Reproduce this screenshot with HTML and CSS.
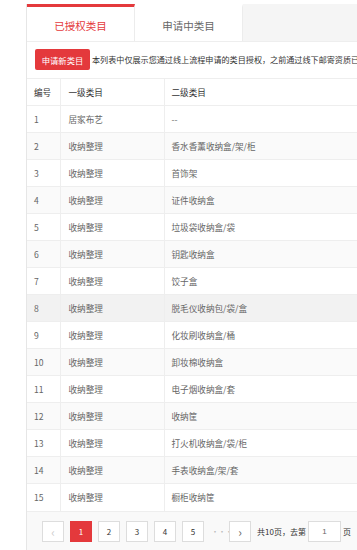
FILE: index.html
```html
<!DOCTYPE html>
<html lang="zh-CN">
<head>
    <meta charset="UTF-8">
    <meta name="viewport" content="width=device-width, initial-scale=1.0">
    <title>已授权类目</title>
    <link rel="stylesheet" href="styles.css">
</head>
<body>
    <div class="page">
        <div class="tabs">
            <div class="tab active">已授权类目</div>
            <div class="tab">申请中类目</div>
        </div>
        <div class="panel">
            <div class="toolbar">
                <button class="btn-apply">申请新类目</button>
                <span class="tip">本列表中仅展示您通过线上流程申请的类目授权，之前通过线下邮寄资质已授权的类目不在此展示</span>
            </div>
            <table class="cat-table">
                <thead>
                    <tr><th class="c1">编号</th><th class="c2">一级类目</th><th>二级类目</th></tr>
                </thead>
                <tbody>
                    <tr><td>1</td><td>居家布艺</td><td>--</td></tr>
                    <tr><td>2</td><td>收纳整理</td><td>香水香薰收纳盒/架/柜</td></tr>
                    <tr><td>3</td><td>收纳整理</td><td>首饰架</td></tr>
                    <tr><td>4</td><td>收纳整理</td><td>证件收纳盒</td></tr>
                    <tr><td>5</td><td>收纳整理</td><td>垃圾袋收纳盒/袋</td></tr>
                    <tr><td>6</td><td>收纳整理</td><td>钥匙收纳盒</td></tr>
                    <tr><td>7</td><td>收纳整理</td><td>饺子盒</td></tr>
                    <tr class="hover"><td>8</td><td>收纳整理</td><td>脱毛仪收纳包/袋/盒</td></tr>
                    <tr><td>9</td><td>收纳整理</td><td>化妆刷收纳盒/桶</td></tr>
                    <tr><td>10</td><td>收纳整理</td><td>卸妆棉收纳盒</td></tr>
                    <tr><td>11</td><td>收纳整理</td><td>电子烟收纳盒/套</td></tr>
                    <tr><td>12</td><td>收纳整理</td><td>收纳筐</td></tr>
                    <tr><td>13</td><td>收纳整理</td><td>打火机收纳盒/袋/柜</td></tr>
                    <tr><td>14</td><td>收纳整理</td><td>手表收纳盒/架/套</td></tr>
                    <tr><td>15</td><td>收纳整理</td><td>橱柜收纳筐</td></tr>
                </tbody>
            </table>
            <div class="pager">
                <span class="pg arrow disabled">&lsaquo;</span>
                <span class="pg current">1</span>
                <span class="pg">2</span>
                <span class="pg">3</span>
                <span class="pg">4</span>
                <span class="pg">5</span>
                <span class="dots">···</span>
                <span class="pg arrow">&rsaquo;</span>
                <span class="total">共10页，去第</span>
                <input class="goto" type="text" value="1">
                <span class="total">页</span>
            </div>
        </div>
    </div>
</body>
</html>
```

FILE: styles.css
```css
body {
    margin: 0;
    background: #fff;
    font-family: "Noto Sans CJK SC", "Noto Sans", sans-serif;
    overflow: hidden;
}
.page {
    margin: 4px 0 0 26px;
    width: 520px;
    border-left: 1px solid #e6e6e6;
    min-height: 560px;
}
.tabs {
    display: flex;
    background: #f5f5f5;
    height: 37px;
}
.tab {
    width: 108px;
    height: 37px;
    box-sizing: border-box;
    background: #fff;
    border-top: 3px solid transparent;
    border-right: 1px solid #ececec;
    padding-top: 3px;
    color: #666;
    font-size: 10.5px;
    display: flex;
    align-items: center;
    justify-content: center;
}
.tab.active {
    color: #e4393c;
    border-top-color: #e4393c;
}
.panel {
    background: #fff;
    border-top: 1px solid #eee;
}
.toolbar {
    display: flex;
    align-items: center;
    padding: 7px 0 0 8px;
    height: 21px;
}
.btn-apply {
    width: 55px;
    height: 21px;
    padding: 0;
    border: none;
    border-radius: 2px;
    background: #e4393c;
    color: #fff;
    font-family: inherit;
    font-size: 8.3px;
    flex-shrink: 0;
}
.tip {
    margin-left: 2px;
    font-size: 8.1px;
    color: #333;
    white-space: nowrap;
}
.cat-table {
    margin-top: 8px;
    width: 100%;
    border-collapse: collapse;
    font-size: 8.6px;
    color: #666;
}
.cat-table th, .cat-table td {
    height: 27px;
    padding: 0 0 0 7px;
    text-align: left;
    font-weight: normal;
    border-top: 1px solid #eee;
    border-right: 1px solid #eee;
    box-sizing: border-box;
}
.cat-table th {
    color: #333;
}
.cat-table .c1 {
    width: 33px;
}
.cat-table .c2 {
    width: 104px;
}
.cat-table td:nth-child(2), .cat-table th:nth-child(2) {
    padding-left: 8px;
}
.cat-table tbody tr:nth-child(even) {
    background: #fafafa;
}
.cat-table tbody tr.hover {
    background: #f2f2f2;
}
.pager {
    display: flex;
    align-items: center;
    background: #f9f9f9;
    border-top: 1px solid #eee;
    padding: 9px 0 14px 15px;
    font-size: 8px;
    color: #333;
}
.pg {
    width: 22px;
    height: 21px;
    box-sizing: border-box;
    border: 1px solid #ddd;
    background: #fff;
    margin-right: 6px;
    display: flex;
    align-items: center;
    justify-content: center;
    color: #333;
}
.pg.arrow {
    font-size: 12px;
    color: #666;
}
.pg.disabled {
    color: #ccc;
}
.pg.current {
    background: #e4393c;
    border-color: #e4393c;
    color: #fff;
}
.dots {
    width: 13px;
    color: #bbb;
    text-align: center;
    margin: 0 5px 0 1px;
    letter-spacing: -1px;
}
.goto {
    width: 33px;
    height: 21px;
    box-sizing: border-box;
    border: 1px solid #ddd;
    margin: 0 2px 0 2px;
    text-align: center;
    font-size: 8px;
    color: #666;
    padding: 0;
}
```
